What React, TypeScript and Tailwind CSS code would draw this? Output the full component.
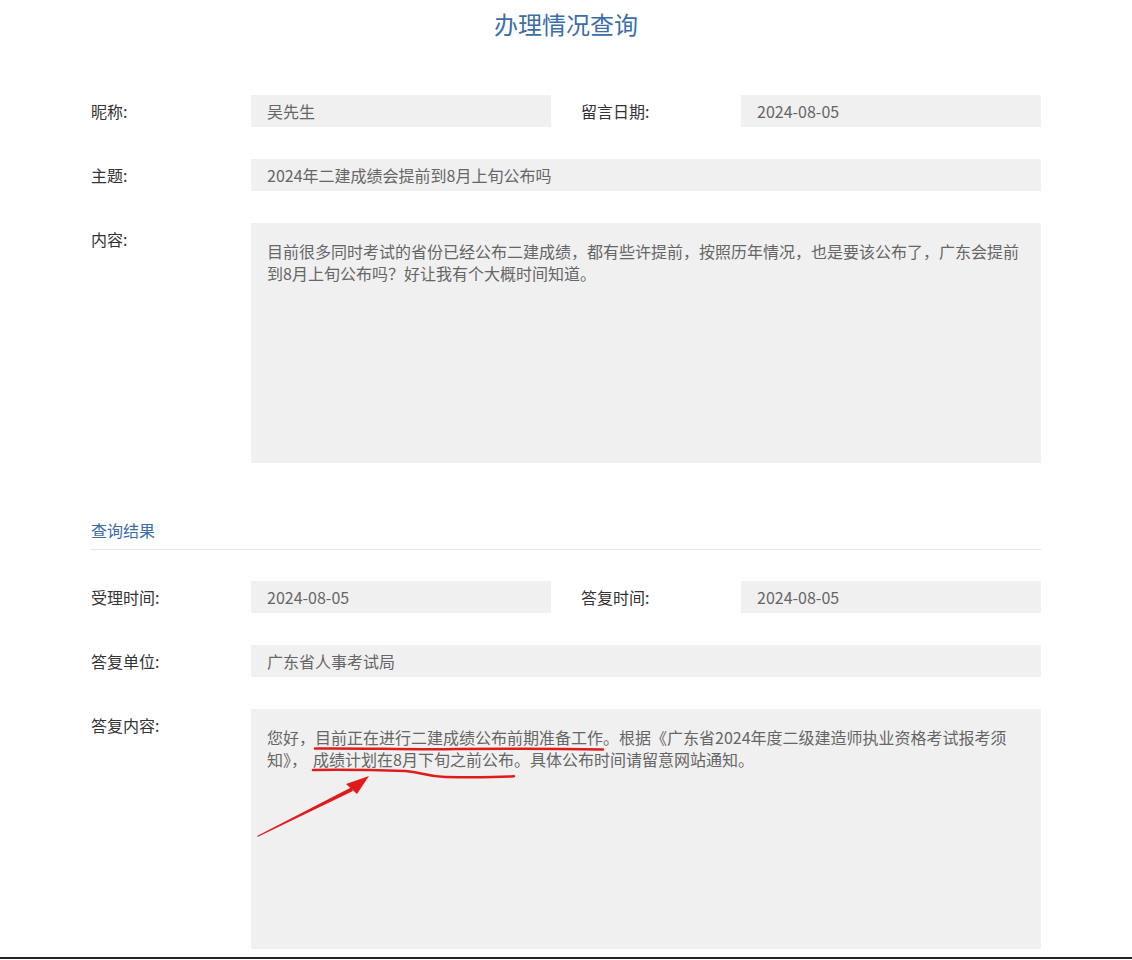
import type { ReactNode } from "react";

const font = { fontFamily: '"Noto Sans CJK SC", "Microsoft YaHei", sans-serif' };

function Label({ children }: { children: ReactNode }) {
  return <div className="w-[160px] shrink-0 text-[16px] leading-[32px] text-[#333]">{children}</div>;
}

function Value({ children, wide = false }: { children: ReactNode; wide?: boolean }) {
  return (
    <div
      className={`${wide ? "w-[790px]" : "w-[300px]"} h-[32px] bg-[#f0f0f0] px-4 text-[16px] leading-[32px] text-[#666]`}
    >
      {children}
    </div>
  );
}

function Row({ children }: { children: ReactNode }) {
  return <div className="flex items-start">{children}</div>;
}

function Underline1({ children }: { children: ReactNode }) {
  return (
    <span className="relative">
      {children}
      <svg
        className="pointer-events-none absolute left-0 top-[calc(100%-3px)] h-[6px] w-full overflow-visible"
        viewBox="0 0 100 6"
        preserveAspectRatio="none"
      >
        <path
          d="M0 2.5 C 15 2, 30 3.6, 45 3.2 S 75 2.2, 100 3.4"
          fill="none"
          stroke="#e01b1b"
          strokeWidth="2.5"
          strokeLinecap="round"
          vectorEffect="non-scaling-stroke"
        />
      </svg>
    </span>
  );
}

function Underline2({ children }: { children: ReactNode }) {
  return (
    <span className="relative ml-[6px]">
      {children}
      <svg
        className="pointer-events-none absolute left-0 top-[calc(100%-3px)] h-[12px] w-full overflow-visible"
        viewBox="0 0 100 12"
        preserveAspectRatio="none"
      >
        <path
          d="M0 2 C 20 1.5, 38 2.5, 46 3 C 54 4, 56 8.5, 66 9 C 80 9.5, 92 9.2, 100 8.2"
          fill="none"
          stroke="#e01b1b"
          strokeWidth="2.5"
          strokeLinecap="round"
          vectorEffect="non-scaling-stroke"
        />
      </svg>
    </span>
  );
}

export default function App() {
  return (
    <div className="min-h-[960px] bg-white" style={font}>
      <div className="mx-auto w-[950px]">
        <h1 className="text-center text-[24px] leading-[48px] text-[#3b6ea6]">办理情况查询</h1>

        <div className="mt-[47px] flex flex-col gap-[32px]">
          <Row>
            <Label>昵称:</Label>
            <Value>吴先生</Value>
            <div className="w-[30px]" />
            <Label>留言日期:</Label>
            <Value>2024-08-05</Value>
          </Row>
          <Row>
            <Label>主题:</Label>
            <Value wide>2024年二建成绩会提前到8月上旬公布吗</Value>
          </Row>
          <Row>
            <Label>内容:</Label>
            <div className="h-[240px] w-[790px] bg-[#f0f0f0] px-4 pt-[17px] text-[16px] leading-[22px] text-[#666]">
              目前很多同时考试的省份已经公布二建成绩，都有些许提前，按照历年情况，也是要该公布了，广东会提前到8月上旬公布吗？好让我有个大概时间知道。
            </div>
          </Row>
        </div>

        <div className="mt-[56px] border-b border-[#e6e6e6] pb-[8px] text-[16px] leading-[22px] text-[#3b6ea6]">
          查询结果
        </div>

        <div className="mt-[31px] flex flex-col gap-[32px]">
          <Row>
            <Label>受理时间:</Label>
            <Value>2024-08-05</Value>
            <div className="w-[30px]" />
            <Label>答复时间:</Label>
            <Value>2024-08-05</Value>
          </Row>
          <Row>
            <Label>答复单位:</Label>
            <Value wide>广东省人事考试局</Value>
          </Row>
          <Row>
            <Label>答复内容:</Label>
            <div className="relative h-[240px] w-[790px] bg-[#f0f0f0] px-4 pt-[17px] text-[16px] leading-[22px] text-[#666]">
              您好，<Underline1>目前正在进行二建成绩公布前期准备工作</Underline1>。根据《广东省2024年度二级建造师执业资格考试报考须知》，
              <Underline2>成绩计划在8月下旬之前公布</Underline2>。具体公布时间请留意网站通知。
              <svg className="pointer-events-none absolute left-0 top-0 h-[140px] w-[140px]" viewBox="0 0 140 140">
                <polygon points="6,127 100,78.5 102,82 7,127.8" fill="#e01b1b" />
                <polygon points="118,67 95,75 106,85" fill="#e01b1b" />
              </svg>
            </div>
          </Row>
        </div>
      </div>
      <div className="mt-[8px] h-[2px] w-full bg-[#222]" />
    </div>
  );
}
